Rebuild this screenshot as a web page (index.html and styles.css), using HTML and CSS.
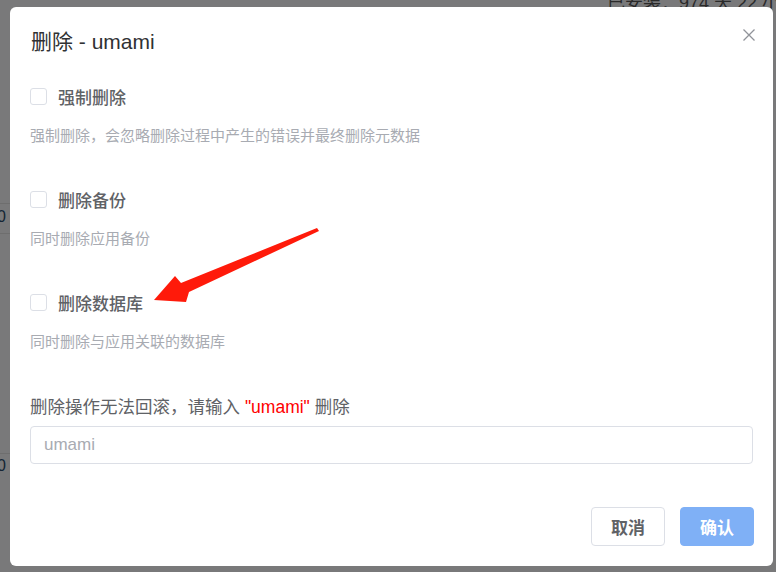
FILE: index.html
```html
<!DOCTYPE html>
<html lang="zh-CN">
<head>
<meta charset="utf-8">
<title>删除 - umami</title>
<link rel="stylesheet" href="styles.css">
</head>
<body>
<div class="page">
  <div class="bg-text">已安装：974 天 22 小</div>
  <div class="bg-line l1"></div>
  <div class="bg-line l2"></div>
  <div class="bg-line l3"></div>
  <div class="bg-zero z1">0</div>
  <div class="bg-zero z2">0</div>
</div>
<div class="overlay"></div>
<div class="dialog">
  <div class="dialog-header">
    <span class="dialog-title">删除 - umami</span>
    <button class="close" aria-label="关闭">
      <svg width="14" height="14" viewBox="0 0 14 14"><path d="M1.5 1.5 L12.5 12.5 M12.5 1.5 L1.5 12.5" stroke="#909399" stroke-width="1.3" fill="none"/></svg>
    </button>
  </div>
  <div class="dialog-body">
    <div class="option">
      <label class="check"><span class="box"></span><span class="check-label">强制删除</span></label>
      <div class="desc">强制删除，会忽略删除过程中产生的错误并最终删除元数据</div>
    </div>
    <div class="option">
      <label class="check"><span class="box"></span><span class="check-label">删除备份</span></label>
      <div class="desc">同时删除应用备份</div>
    </div>
    <div class="option">
      <label class="check"><span class="box"></span><span class="check-label">删除数据库</span></label>
      <div class="desc">同时删除与应用关联的数据库</div>
    </div>
    <div class="confirm-text">删除操作无法回滚，请输入 <span class="red">"umami"</span> 删除</div>
    <input class="input" type="text" placeholder="umami">
  </div>
  <div class="dialog-footer">
    <button class="btn btn-cancel">取消</button>
    <button class="btn btn-primary">确认</button>
  </div>
</div>
<svg class="arrow" width="776" height="572" viewBox="0 0 776 572">
  <polygon points="154,300 175,276 181,283 317,228 319,231 189,292 186,302" fill="#ff1a0a"/>
</svg>
</body>
</html>
```

FILE: styles.css
```css
* { box-sizing: border-box; }
html, body { margin: 0; padding: 0; }
body {
  width: 776px;
  height: 572px;
  overflow: hidden;
  font-family: "Liberation Sans", "Noto Sans CJK SC", sans-serif;
  background: #f2f3f5;
  position: relative;
}
.page { position: absolute; inset: 0; }
.bg-text {
  position: absolute;
  left: 607px;
  top: -12px;
  font-size: 18px;
  color: #555;
  white-space: nowrap;
}
.bg-line { position: absolute; left: 0; width: 20px; height: 1px; background: #ddd; }
.l1 { top: 203px; }
.l2 { top: 233px; }
.l3 { top: 453px; }
.bg-zero { position: absolute; left: -3px; font-size: 16px; color: #2a4a6a; }
.z1 { top: 208px; }
.z2 { top: 457px; }
.overlay {
  position: absolute;
  inset: 0;
  background: rgba(0, 0, 0, 0.5);
}
.dialog {
  position: absolute;
  left: 10px;
  top: 7px;
  width: 763px;
  height: 559px;
  background: #fff;
  border-radius: 6px;
  display: flex;
  flex-direction: column;
}
.dialog-header {
  padding: 21px 20px 19px 21px;
  display: flex;
  justify-content: space-between;
  align-items: flex-start;
  height: 68px;
}
.dialog-title {
  font-size: 21px;
  line-height: 28px;
  color: #303133;
}
.close {
  border: 0;
  background: none;
  padding: 0;
  margin: 0 -3px 0 0;
  width: 14px;
  height: 14px;
  display: flex;
}
.dialog-body {
  padding: 9px 20px 0 20px;
  display: flex;
  flex-direction: column;
}
.option { margin-bottom: 41px; }
.check {
  display: flex;
  align-items: center;
  height: 24px;
}
.box {
  width: 17px;
  height: 17px;
  border: 1px solid #dcdfe6;
  border-radius: 3px;
  background: #fff;
  margin-right: 11px;
}
.check-label {
  font-size: 17px;
  color: #606266;
  font-weight: 500;
}
.desc {
  margin-top: 18px;
  font-size: 15px;
  line-height: 20px;
  color: #a8abb2;
}
.confirm-text {
  margin-top: 2px;
  font-size: 17.5px;
  line-height: 24px;
  color: #606266;
}
.red { color: #ff0000; }
.input {
  margin-top: 7px;
  height: 38px;
  width: 100%;
  border: 1px solid #dcdfe6;
  border-radius: 4px;
  padding: 0 13px;
  font-family: "Liberation Sans", "Noto Sans CJK SC", sans-serif;
  font-size: 17px;
  outline: none;
}
.input::placeholder { color: #a8abb2; }
.dialog-footer {
  margin-top: auto;
  padding: 0 19px 20px 20px;
  display: flex;
  justify-content: flex-end;
  gap: 15px;
}
.btn {
  width: 74px;
  height: 39px;
  border-radius: 4px;
  font-family: "Liberation Sans", "Noto Sans CJK SC", sans-serif;
  font-size: 17px;
  font-weight: 700;
  padding: 0;
}
.btn-cancel {
  background: #fff;
  border: 1px solid #dcdfe6;
  color: #606266;
}
.btn-primary {
  background: #7fb0f6;
  border: 1px solid #7fb0f6;
  color: #fff;
}
.arrow {
  position: absolute;
  left: 0;
  top: 0;
  pointer-events: none;
}
```
